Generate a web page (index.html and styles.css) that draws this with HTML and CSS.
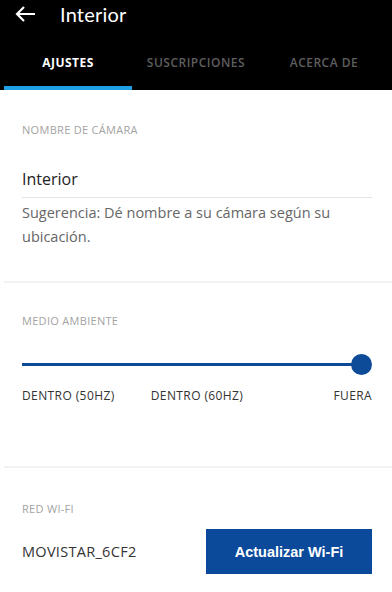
FILE: index.html
```html
<!DOCTYPE html>
<html lang="es">
<head>
<meta charset="utf-8">
<link rel="stylesheet" href="styles.css">
</head>
<body>
<header class="appbar">
  <div class="titlebar">
    <svg class="back" width="22" height="18" viewBox="0 0 22 18"><path d="M21 9H3M10 2L3 9l7 7" fill="none" stroke="#fff" stroke-width="2.2"/></svg>
    <span class="title">Interior</span>
  </div>
  <nav class="tabs">
    <div class="tab active">AJUSTES</div>
    <div class="tab">SUSCRIPCIONES</div>
    <div class="tab">ACERCA DE</div>
  </nav>
</header>
<main>
  <section class="sec sec-name">
    <div class="label">NOMBRE DE CÁMARA</div>
    <div class="input">Interior</div>
    <p class="hint">Sugerencia: Dé nombre a su cámara según su ubicación.</p>
  </section>
  <div class="divider"></div>
  <section class="sec sec-env">
    <div class="label">MEDIO AMBIENTE</div>
    <div class="slider"><div class="track"></div><div class="knob"></div></div>
    <div class="stops"><span>DENTRO (50HZ)</span><span class="mid">DENTRO (60HZ)</span><span class="end">FUERA</span></div>
  </section>
  <div class="divider"></div>
  <section class="sec sec-wifi">
    <div class="label">RED WI-FI</div>
    <div class="wifirow"><span class="ssid">MOVISTAR_6CF2</span><button class="btn">Actualizar Wi-Fi</button></div>
  </section>
</main>
</body>
</html>
```
FILE: styles.css
```css
html, body { margin: 0; padding: 0; background: #fff; }
body { font-family: "Open Sans", "Lato", sans-serif; width: 392px; overflow: hidden; }
.appbar { background: #000; height: 90px; display: flex; flex-direction: column; }
.titlebar { height: 30px; display: flex; align-items: center; padding-left: 14px; }
.back { display: block; margin-top: -2px; }
.title { font-family: "Lato", sans-serif; color: #fff; font-size: 20px; margin-left: 24px; margin-top: -2px; letter-spacing: 0.2px; }
.tabs { flex: 1; display: flex; padding-left: 4px; }
.tab { width: 128px; display: flex; align-items: center; justify-content: center; color: #5e5e5e; font-size: 12px; font-weight: 600; letter-spacing: 0.5px; border-bottom: 4px solid transparent; padding-top: 8px; }
.tab.active { color: #fff; font-weight: 700; border-bottom-color: #1ea0e6; }
.sec { padding: 0 20px 0 22px; box-sizing: border-box; }
.label { color: #a3a3a3; font-size: 11px; line-height: 14px; letter-spacing: 0.3px; }
.sec-name { padding-top: 33px; height: 191px; }
.input { margin-top: 31px; font-size: 16px; line-height: 22px; color: #222; padding-bottom: 7px; border-bottom: 1px solid #e4e4e4; }
.hint { margin: 3px 0 0; font-size: 14.5px; line-height: 24px; color: #666; }
.divider { height: 2px; background: #f2f2f2; margin-left: 4px; }
.sec-env { padding-top: 31px; height: 183px; }
.slider { position: relative; height: 22px; margin-top: 26px; }
.track { position: absolute; left: 0; right: 10px; top: 9px; height: 3px; background: #0d4a98; }
.knob { position: absolute; right: 0; top: 0; width: 21px; height: 21px; border-radius: 50%; background: #0d4a98; }
.stops { display: grid; grid-template-columns: 1fr auto 1fr; margin-top: 12px; font-size: 12px; line-height: 16px; letter-spacing: 0.4px; color: #333; }
.stops .mid { text-align: center; }
.stops .end { text-align: right; }
.sec-wifi { padding-top: 34px; }
.wifirow { display: flex; align-items: center; justify-content: space-between; margin-top: 13px; }
.ssid { font-size: 14.5px; letter-spacing: 0.3px; color: #333; }
.btn { width: 166px; height: 45px; border: 0; background: #0b4a9b; color: #fff; font-family: "Liberation Sans", Arial, sans-serif; font-weight: 700; font-size: 14.5px; }
```
